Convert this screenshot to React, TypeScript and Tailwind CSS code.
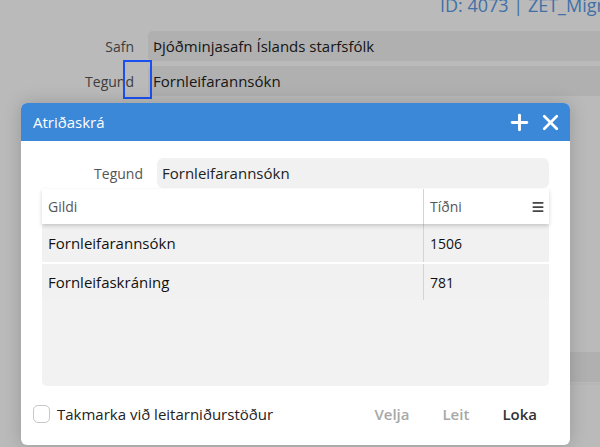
import { Plus, X, Menu } from "lucide-react";

// Page behind the modal (dimmed by overlay)
const BackgroundPage = () => (
  <div className="w-full h-full bg-white flex flex-col">
    <div className="h-[30px] flex justify-start pl-[440px] -mt-[7px]">
      <p className="text-[18px] leading-[25px] text-[#5a9ae6] whitespace-nowrap">ID: 4073 | ZET_Migr</p>
    </div>
    <div className="flex flex-col gap-[5px] mt-[8px]">
      <div className="flex items-center">
        <p className="w-[134px] text-right text-[14px] text-[#555]">Safn</p>
        <div className="ml-[14px] flex-1 h-[30px] bg-[#f1f1f1] rounded-l-[5px] flex items-center px-[5px] text-[15px] text-[#222]">
          Þjóðminjasafn Íslands starfsfólk
        </div>
      </div>
      <div className="flex items-center">
        <p className="w-[134px] text-right text-[14px] text-[#555]">Tegund</p>
        <div className="ml-[14px] flex-1 h-[30px] bg-[#f1f1f1] rounded-l-[5px] flex items-center px-[5px] text-[15px] text-[#222]">
          Fornleifarannsókn
        </div>
      </div>
    </div>
    <div className="mt-[256px] ml-[148px] h-[30px] bg-[#f1f1f1]" />
    <div className="mt-[1px] ml-[148px] h-[2px] bg-[#fafafa]" />
  </div>
);

const App = () => {
  const rows = [
    { gildi: "Fornleifarannsókn", tidni: "1506" },
    { gildi: "Fornleifaskráning", tidni: "781" },
  ];

  return (
    <div
      className="relative w-[600px] h-[447px] overflow-hidden"
      style={{ fontFamily: '"Open Sans", "Noto Sans", sans-serif' }}
    >
      <BackgroundPage />

      {/* overlay */}
      <div className="absolute inset-0 bg-black/[0.27]" />

      {/* focus highlight */}
      <div className="absolute left-[123px] top-[60px] w-[29px] h-[39px] border-2 border-[#1a50f0]" />

      {/* Dialog */}
      <div className="absolute left-[21px] top-[103px] w-[549px] h-[342px] bg-white rounded-[6px] shadow-[0_0_18px_rgba(0,0,0,0.18)] flex flex-col overflow-hidden">
        {/* header */}
        <div className="h-[38px] bg-[#3b88d8] flex items-center justify-between pl-[12px] pr-[7px]">
          <p className="text-white text-[15px]">Atriðaskrá</p>
          <div className="flex items-center gap-[6px] text-white">
            <Plus size={25} strokeWidth={2.8} />
            <X size={25} strokeWidth={2.6} />
          </div>
        </div>

        {/* body */}
        <div className="flex flex-col px-[21px] pt-[17px]">
          <div className="flex items-center">
            <p className="w-[101px] text-right text-[14px] text-[#555]">Tegund</p>
            <div className="ml-[14px] flex-1 h-[30px] bg-[#f1f1f1] rounded-[6px] flex items-center px-[5px] text-[15px] text-[#222]">
              Fornleifarannsókn
            </div>
          </div>

          {/* table */}
          <div className="mt-[1px] h-[197px] bg-[#f2f2f2] rounded-b-[5px] flex flex-col">
            <div className="h-[35px] bg-white flex items-center shadow-[0_2px_4px_rgba(0,0,0,0.18)] relative">
              <p className="w-[381px] pl-[6px] text-[14px] text-[#555]">Gildi</p>
              <div className="h-full w-px bg-[#d4d4d4]" />
              <p className="flex-1 pl-[6px] text-[14px] text-[#555]">Tíðni</p>
              <Menu size={14} strokeWidth={3} className="mr-[4px] text-[#444]" />
            </div>
            {rows.map((r, i) => (
              <div
                key={r.gildi}
                className={`h-[38px] flex items-center bg-[#f1f1f1] ${i > 0 ? "border-t-2 border-white" : ""}`}
              >
                <p className="w-[381px] pl-[6px] text-[15px] text-[#111]">{r.gildi}</p>
                <div className="h-full w-px bg-[#d4d4d4]" />
                <p className="flex-1 pl-[6px] text-[14px] text-[#111]">{r.tidni}</p>
              </div>
            ))}
          </div>
        </div>

        {/* footer */}
        <div className="flex items-center justify-between pl-[12px] pr-[33px] mt-[17px]">
          <label className="flex items-center gap-[7px]">
            <span className="w-[17px] h-[18px] rounded-[5px] border border-[#c8c8c8] bg-white" />
            <span className="text-[15px] text-[#222]">Takmarka við leitarniðurstöður</span>
          </label>
          <div className="flex items-center gap-[33px] text-[15px] font-semibold">
            <span className="text-[#a8a8a8]">Velja</span>
            <span className="text-[#a8a8a8]">Leit</span>
            <span className="text-[#333]">Loka</span>
          </div>
        </div>
      </div>
    </div>
  );
};

export default App;
